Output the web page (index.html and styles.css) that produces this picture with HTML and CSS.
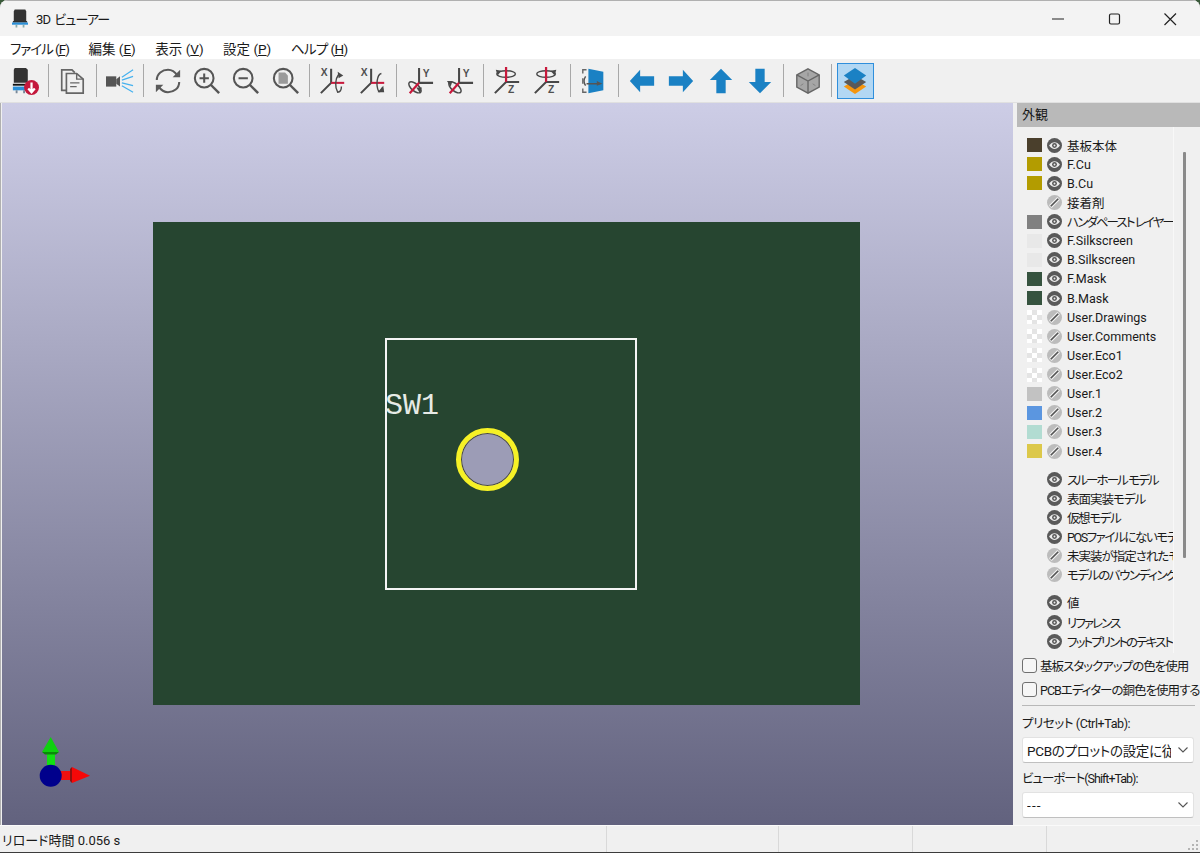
FILE: index.html
```html
<!DOCTYPE html>
<html lang="ja">
<head>
    <meta charset="UTF-8">
    <title>3D ビューアー</title>
    <link rel="stylesheet" href="styles.css">
</head>
<body>

<svg class="defs" width="0" height="0">
    <symbol id="eye" viewBox="0 0 16 16">
        <circle cx="8" cy="8" r="8" fill="#595959"/>
        <path d="M2.2 8C3.8 5.6 6 4.4 8 4.4S12.2 5.6 13.8 8C12.2 10.4 10 11.6 8 11.6S3.8 10.4 2.2 8Z" fill="#ececec"/>
        <circle cx="8" cy="8" r="2.6" fill="#595959"/>
        <circle cx="8" cy="8" r="1" fill="#ececec"/>
    </symbol>
    <symbol id="off" viewBox="0 0 16 16">
        <circle cx="8" cy="8" r="8" fill="#bcbcbc"/>
        <path d="M3.6 12.4L12.4 3.6" stroke="#f4f4f4" stroke-width="4"/>
        <path d="M4 12L12 4" stroke="#555" stroke-width="1.8"/>
    </symbol>
    <symbol id="chip" viewBox="0 0 18 20">
        <path d="M3 0H15L16 2V13H2V2Z" fill="#333"/>
        <rect x="1" y="13" width="16" height="1.5" fill="#111"/>
        <rect x="0" y="14.5" width="18" height="2.5" fill="#2a8fd8"/>
        <path d="M4 17H6V20H4ZM12 17H14V20H12Z" fill="#8aa"/>
    </symbol>
</svg>

<div class="window">

    <div class="titlebar">
        <svg class="app-icon" width="16" height="19"><use href="#chip"/></svg>
        <span class="title">3D ビューアー</span>
        <div class="winctl">
            <svg width="46" height="36" viewBox="0 0 46 36"><path d="M17 18H29" stroke="#222" stroke-width="1.2"/></svg>
            <svg width="46" height="36" viewBox="0 0 46 36"><rect x="18.5" y="13" width="10" height="10" rx="1.5" fill="none" stroke="#222" stroke-width="1.2"/></svg>
            <svg width="46" height="36" viewBox="0 0 46 36"><path d="M17.5 12.5L29 24M29 12.5L17.5 24" stroke="#222" stroke-width="1.2"/></svg>
        </div>
    </div>

    <div class="menubar">
        <span class="menu-kana">ファイル (<u>F</u>)</span>
        <span>編集 (<u>E</u>)</span>
        <span>表示 (<u>V</u>)</span>
        <span>設定 (<u>P</u>)</span>
        <span class="menu-kana2">ヘルプ (<u>H</u>)</span>
    </div>

    <div class="toolbar">
        <div class="tool">
            <svg viewBox="0 0 30 30"><path d="M4 1H16L18 3V17H3V3Z" fill="#333"/><rect x="2" y="18" width="17" height="2" fill="#111"/><rect x="2" y="21" width="15" height="4" fill="#2a8fd8"/><path d="M5 25H7V28H5ZM13 25H15V28H13Z" fill="#789"/><circle cx="22" cy="22" r="8" fill="#c4183c"/><path d="M22 16.5V26M18.5 23L22 27L25.5 23" fill="none" stroke="#fff" stroke-width="2.4"/></svg>
        </div>
        <i class="sep"></i>
        <div class="tool">
            <svg viewBox="0 0 30 30"><path d="M9 25H4V3H15L18 6" fill="none" stroke="#666" stroke-width="1.8"/><path d="M9 7H20L27 13V28H9Z" fill="#f0f0f0" stroke="#666" stroke-width="1.8"/><path d="M20 7V13H27M13 17H23M13 21H20" fill="none" stroke="#666" stroke-width="1.5"/></svg>
        </div>
        <i class="sep"></i>
        <div class="tool">
            <svg viewBox="0 0 30 30"><rect x="0" y="10" width="11" height="11" fill="#555"/><path d="M11 13L15 10V21L11 18Z" fill="#555"/><path d="M17 11L29 3M17 14L29 10M17 17L29 20M17 20L29 27" stroke="#45b1ee" stroke-width="1.3"/></svg>
        </div>
        <i class="sep"></i>
        <div class="tool">
            <svg viewBox="0 0 30 30"><path d="M3 14C3 7 9 3 15 3C20 3 23 6 25 9M27 16C27 23 21 27 15 27C10 27 7 24 5 21" fill="none" stroke="#5a5a5a" stroke-width="2.2"/><path d="M28 3V11H20ZM2 27V19H10Z" fill="#5a5a5a"/></svg>
        </div>
        <div class="tool">
            <svg viewBox="0 0 30 30"><circle cx="12" cy="12" r="10" fill="none" stroke="#555" stroke-width="2.2"/><path d="M19 19L28 28" stroke="#555" stroke-width="2.6"/><path d="M12 7V17M7 12H17" stroke="#555" stroke-width="2.2"/></svg>
        </div>
        <div class="tool">
            <svg viewBox="0 0 30 30"><circle cx="12" cy="12" r="10" fill="none" stroke="#555" stroke-width="2.2"/><path d="M19 19L28 28" stroke="#555" stroke-width="2.6"/><path d="M7 12H17" stroke="#555" stroke-width="2.2"/></svg>
        </div>
        <div class="tool">
            <svg viewBox="0 0 30 30"><circle cx="12" cy="12" r="10" fill="none" stroke="#555" stroke-width="2.2"/><path d="M19 19L28 28" stroke="#555" stroke-width="2.6"/><path d="M7 6H14L17 9V18H7Z" fill="#9a9a9a"/></svg>
        </div>
        <i class="sep"></i>
        <div class="tool">
            <svg viewBox="0 0 30 30"><text x="2" y="10" class="axis">X</text><path d="M2 28L13 17V2" fill="none" stroke="#484848" stroke-width="2.2"/><path d="M13 17H27" stroke="#c8193c" stroke-width="2.2"/><path d="M21 8C17 13 17 22 20 27C23 27 24 24 24 21" fill="none" stroke="#484848" stroke-width="1.5"/><path d="M20 5L26 9L21 12Z" fill="#484848"/></svg>
        </div>
        <div class="tool">
            <svg viewBox="0 0 30 30"><text x="2" y="10" class="axis">X</text><path d="M2 28L13 17V2" fill="none" stroke="#484848" stroke-width="2.2"/><path d="M13 17H27" stroke="#c8193c" stroke-width="2.2"/><path d="M24 7C19 8 18 20 21 26C23 27 25 25 25 22" fill="none" stroke="#484848" stroke-width="1.5"/><path d="M20 27L27 27L26 20Z" fill="#484848"/></svg>
        </div>
        <i class="sep"></i>
        <div class="tool">
            <svg viewBox="0 0 30 30"><text x="18" y="11" class="axis">Y</text><path d="M14 1V17H29" fill="none" stroke="#484848" stroke-width="2.2"/><ellipse cx="9.600" cy="21.800" rx="8" ry="3.800" transform="rotate(40 9.600 21.800)" fill="none" stroke="#484848" stroke-width="1.6"/><path d="M14 17L4 28" stroke="#c8193c" stroke-width="2.400"/><path d="M11 22L17 22L15 28Z" fill="#484848"/></svg>
        </div>
        <div class="tool">
            <svg viewBox="0 0 30 30"><text x="18" y="11" class="axis">Y</text><path d="M14 1V17H29" fill="none" stroke="#484848" stroke-width="2.2"/><ellipse cx="9.600" cy="21.800" rx="8" ry="3.800" transform="rotate(40 9.600 21.800)" fill="none" stroke="#484848" stroke-width="1.6"/><path d="M14 17L4 28" stroke="#c8193c" stroke-width="2.400"/><path d="M1 15L7 15L5 21Z" fill="#484848"/></svg>
        </div>
        <i class="sep"></i>
        <div class="tool">
            <svg viewBox="0 0 30 30"><text x="16" y="28" class="axis">Z</text><path d="M2 28L14 16H28" fill="none" stroke="#484848" stroke-width="2.2"/><ellipse cx="14" cy="7.500" rx="10" ry="3.500" fill="none" stroke="#484848" stroke-width="1.5"/><path d="M14 16V0" stroke="#c8193c" stroke-width="2.400"/><path d="M3 3L9 4L5 9Z" fill="#484848"/></svg>
        </div>
        <div class="tool">
            <svg viewBox="0 0 30 30"><text x="16" y="28" class="axis">Z</text><path d="M2 28L14 16H28" fill="none" stroke="#484848" stroke-width="2.2"/><ellipse cx="14" cy="7.500" rx="10" ry="3.500" fill="none" stroke="#484848" stroke-width="1.5"/><path d="M14 16V0" stroke="#c8193c" stroke-width="2.400"/><path d="M25 3L19 4L23 9Z" fill="#484848"/></svg>
        </div>
        <i class="sep"></i>
        <div class="tool">
            <svg viewBox="0 0 30 30"><path d="M7 3H3V7M3 12V18M3 23V27H7" fill="none" stroke="#666" stroke-width="1.5"/><path d="M9 2L25 5V25L9 28Z" fill="#1a81c4"/><path d="M6 10C4 13 4 17 6 20M7 18H21" fill="none" stroke="#555" stroke-width="1.5"/><path d="M18 15L24 18L18 20Z" fill="#555"/></svg>
        </div>
        <i class="sep"></i>
        <div class="tool">
            <svg viewBox="0 0 30 30"><path d="M2 15L13 3V10H28V20H13V27Z" fill="#1a81c4"/></svg>
        </div>
        <div class="tool">
            <svg viewBox="0 0 30 30"><path d="M28 15L17 3V10H2V20H17V27Z" fill="#1a81c4"/></svg>
        </div>
        <div class="tool">
            <svg viewBox="0 0 30 30"><path d="M15 2L27 14H20V28H10V14H3Z" fill="#1a81c4"/></svg>
        </div>
        <div class="tool">
            <svg viewBox="0 0 30 30"><path d="M15 28L27 16H20V2H10V16H3Z" fill="#1a81c4"/></svg>
        </div>
        <i class="sep"></i>
        <div class="tool">
            <svg viewBox="0 0 30 30"><path d="M15 2L27 8.5V21.500L15 28L3 21.500V8.500Z" fill="#a6a6a6" stroke="#666" stroke-width="1.5"/><path d="M3 8.500L15 15L27 8.500M15 15V28" fill="none" stroke="#666" stroke-width="1.5"/><path d="M15 6V10M7 20L10 18M23 20L20 18" stroke="#808080" stroke-width="1"/></svg>
        </div>
        <i class="sep"></i>
        <div class="tool active">
            <svg viewBox="0 0 30 30"><path d="M15 14L27 21L15 29L3 21Z" fill="#f5960f"/><path d="M15 9L27 16L15 24L3 16Z" fill="#595959"/><path d="M15 1L27 9L15 18L3 9Z" fill="#1a81c4"/></svg>
        </div>
    </div>

    <div class="main">
        <div class="canvas">
            <div class="board">
                <div class="courtyard">
                    <span class="refdes">SW1</span>
                    <div class="hole"></div>
                </div>
            </div>
            <svg class="gizmo" width="54" height="60" viewBox="0 0 54 60">
                <rect x="9" y="16" width="8" height="16" fill="#12e012"/>
                <path d="M12.700 0L21 15L4 15Z" fill="#0fd00f"/>
                <path d="M4 15L21 15L18 17.500H7Z" fill="#0a8a0a"/>
                <rect x="20" y="34" width="15" height="9" fill="#f01010"/>
                <path d="M34 30L52 38.700L34 46Z" fill="#f50808"/>
                <path d="M34 30V46L32 44V32Z" fill="#901010"/>
                <circle cx="12.700" cy="38.700" r="11" fill="#00008c"/>
            </svg>
        </div>

        <div class="panel">
            <div class="panel-head">外観</div>
            <div class="panel-body">
                <div class="layers">
                    <div class="row"><i class="swatch c-board"></i><svg class="vis"><use href="#eye"/></svg><span>基板本体</span></div>
                    <div class="row"><i class="swatch c-cu"></i><svg class="vis"><use href="#eye"/></svg><span>F.Cu</span></div>
                    <div class="row"><i class="swatch c-cu"></i><svg class="vis"><use href="#eye"/></svg><span>B.Cu</span></div>
                    <div class="row"><i class="swatch none"></i><svg class="vis"><use href="#off"/></svg><span>接着剤</span></div>
                    <div class="row"><i class="swatch c-paste"></i><svg class="vis"><use href="#eye"/></svg><span class="kana-l">ハンダペースト レイヤー</span></div>
                    <div class="row"><i class="swatch c-silk"></i><svg class="vis"><use href="#eye"/></svg><span>F.Silkscreen</span></div>
                    <div class="row"><i class="swatch c-silk"></i><svg class="vis"><use href="#eye"/></svg><span>B.Silkscreen</span></div>
                    <div class="row"><i class="swatch c-mask"></i><svg class="vis"><use href="#eye"/></svg><span>F.Mask</span></div>
                    <div class="row"><i class="swatch c-mask"></i><svg class="vis"><use href="#eye"/></svg><span>B.Mask</span></div>
                    <div class="row"><i class="swatch c-check"></i><svg class="vis"><use href="#off"/></svg><span>User.Drawings</span></div>
                    <div class="row"><i class="swatch c-check"></i><svg class="vis"><use href="#off"/></svg><span>User.Comments</span></div>
                    <div class="row"><i class="swatch c-check"></i><svg class="vis"><use href="#off"/></svg><span>User.Eco1</span></div>
                    <div class="row"><i class="swatch c-check"></i><svg class="vis"><use href="#off"/></svg><span>User.Eco2</span></div>
                    <div class="row"><i class="swatch c-u1"></i><svg class="vis"><use href="#off"/></svg><span>User.1</span></div>
                    <div class="row"><i class="swatch c-u2"></i><svg class="vis"><use href="#off"/></svg><span>User.2</span></div>
                    <div class="row"><i class="swatch c-u3"></i><svg class="vis"><use href="#off"/></svg><span>User.3</span></div>
                    <div class="row"><i class="swatch c-u4"></i><svg class="vis"><use href="#off"/></svg><span>User.4</span></div>

                    <div class="group">
                        <div class="row"><i class="swatch none"></i><svg class="vis"><use href="#eye"/></svg><span class="kana-l">スルーホール モデル</span></div>
                        <div class="row"><i class="swatch none"></i><svg class="vis"><use href="#eye"/></svg><span class="kana-s">表面実装モデル</span></div>
                        <div class="row"><i class="swatch none"></i><svg class="vis"><use href="#eye"/></svg><span class="kana-m">仮想モデル</span></div>
                        <div class="row"><i class="swatch none"></i><svg class="vis"><use href="#eye"/></svg><span class="kana-m">POSファイルにないモデル</span></div>
                        <div class="row"><i class="swatch none"></i><svg class="vis"><use href="#off"/></svg><span class="kana-s">未実装が指定されたモデル</span></div>
                        <div class="row"><i class="swatch none"></i><svg class="vis"><use href="#off"/></svg><span class="kana-m">モデルのバウンディング</span></div>
                    </div>
                    <div class="group">
                        <div class="row"><i class="swatch none"></i><svg class="vis"><use href="#eye"/></svg><span>値</span></div>
                        <div class="row"><i class="swatch none"></i><svg class="vis"><use href="#eye"/></svg><span class="kana-l">リファレンス</span></div>
                        <div class="row"><i class="swatch none"></i><svg class="vis"><use href="#eye"/></svg><span class="kana-l">フットプリントのテキスト</span></div>
                    </div>
                </div>
                <div class="scrollbar"><i></i></div>
            </div>

            <label class="check"><i></i><span class="kana-s">基板スタックアップの色を使用</span></label>
            <label class="check"><i></i><span class="kana-s">PCBエディターの銅色を使用する</span></label>
            <div class="rule"></div>

            <div class="field-label first tight">プリセット (Ctrl+Tab):</div>
            <div class="combo">
                <span>PCBのプロットの設定に従う</span>
                <svg width="12" height="8" viewBox="0 0 12 8"><path d="M1.5 1.5L6 6L10.5 1.5" fill="none" stroke="#555" stroke-width="1.1"/></svg>
            </div>
            <div class="field-label kana-s">ビューポート(Shift+Tab):</div>
            <div class="combo">
                <span class="dashes">---</span>
                <svg width="12" height="8" viewBox="0 0 12 8"><path d="M1.5 1.5L6 6L10.5 1.5" fill="none" stroke="#555" stroke-width="1.1"/></svg>
            </div>
        </div>
    </div>

    <div class="statusbar">
        <div class="pane first">リロード時間 0.056 s</div>
        <div class="pane w172"></div>
        <div class="pane w134"></div>
        <div class="pane w134"></div>
        <div class="pane last"></div>
        <svg class="grip" width="12" height="12" viewBox="0 0 12 12"><path d="M8 0h2v2H8zM4 4h2v2H4zM8 4h2v2H8zM0 8h2v2H0zM4 8h2v2H4zM8 8h2v2H8z" fill="#b4b4b4"/></svg>
    </div>
</div>

</body>
</html>
```

FILE: styles.css
```css
/* KiCad 3D viewer window */
* {
    box-sizing: border-box;
}

html, body {
    margin: 0;
    padding: 0;
    height: 100%;
    overflow: hidden;
    background: #3a5a3a;
}

body {
    font-family: Roboto, "Noto Sans CJK JP", sans-serif;
    font-size: 12.5px;
    font-feature-settings: "palt";
    color: #1a1a1a;
}

.defs {
    position: absolute;
}

.axis {
    font-family: "Liberation Sans", sans-serif;
    font-size: 11px;
    font-weight: 700;
    fill: #505050;
}

/* kana is narrower in the original UI font */
.kana-s { letter-spacing: -1px; }
.kana-m { letter-spacing: -1.4px; }
.kana-l { letter-spacing: -1.9px; }
.tight { letter-spacing: -0.4px; }

.window {
    width: 1200px;
    height: 853px;
    display: flex;
    flex-direction: column;
    background: #f0f0f0;
    border-radius: 8px 8px 0 0;
    box-shadow: inset 0 1px 0 #b0b0b0, inset 1px 0 0 #b0b0b0, inset -1px 0 0 #b0b0b0;
    overflow: hidden;
}

/* Title bar */
.titlebar {
    height: 36px;
    display: flex;
    align-items: center;
    background: #f3f3f3;
    border-top: 1px solid #b0b0b0;
    padding-left: 12px;
    flex: none;
}

.app-icon {
    margin-right: 8px;
}

.title {
    font-size: 13px;
    letter-spacing: -0.9px;
    word-spacing: 2px;
}

.winctl {
    margin-left: auto;
    display: flex;
    gap: 10px;
    padding-right: 7px;
}

.winctl svg {
    display: block;
}

/* Menu */
.menubar {
    height: 23px;
    background: #fff;
    display: flex;
    align-items: center;
    gap: 19.5px;
    padding-left: 10px;
    font-size: 13.5px;
    flex: none;
}

.menu-kana { letter-spacing: -1px; }
.menu-kana2 { letter-spacing: -0.6px; }

/* Toolbar */
.toolbar {
    height: 43px;
    display: flex;
    align-items: center;
    padding-left: 5px;
    background: #f0f0f0;
    flex: none;
}

.tool {
    width: 39.3px;
    height: 36px;
    display: flex;
    align-items: center;
    justify-content: center;
    flex: none;
}

.tool svg {
    width: 28px;
    height: 28px;
    display: block;
}

.tool.active {
    background: #b2d7f3;
    border: 1px solid #2f8fdc;
    width: 37px;
    margin-left: 1px;
}

.sep {
    width: 8.4px;
    height: 33px;
    flex: none;
    background: linear-gradient(#a8a8a8, #a8a8a8) center / 1px 100% no-repeat;
}

/* Main area */
.main {
    flex: 1;
    display: flex;
    min-height: 0;
    border-top: 1px solid #e0e0e0;
}

.canvas {
    position: relative;
    width: 1011px;
    margin-left: 2px;
    flex: none;
    background: linear-gradient(#cdcde6, #62627e);
}

.board {
    position: absolute;
    left: 151px;
    top: 119px;
    width: 707px;
    height: 483px;
    background: #264530;
}

.courtyard {
    position: absolute;
    left: 232px;
    top: 116px;
    width: 252px;
    height: 252px;
    border: 2px solid #f4f4f4;
}

.refdes {
    position: absolute;
    left: -2px;
    top: 49px;
    font-family: "Liberation Mono", monospace;
    font-size: 30px;
    line-height: 34px;
    color: #e6ebe6;
}

.hole {
    position: absolute;
    left: 69px;
    top: 88px;
    width: 63px;
    height: 63px;
    border-radius: 50%;
    border: 5px solid #f6f126;
    background: #9c9cb6;
    box-shadow: inset 0 0 0 1px #4a4a40;
}

.gizmo {
    position: absolute;
    left: 36px;
    bottom: 28px;
}

/* Appearance panel */
.panel {
    margin-left: 4px;
    flex: 1;
    display: flex;
    flex-direction: column;
    background: #f0f0f0;
    min-width: 0;
}

.panel-head {
    height: 24px;
    background: #b9b9b9;
    font-size: 13px;
    line-height: 24px;
    padding-left: 5px;
    flex: none;
}

.panel-body {
    display: flex;
    height: 526px;
    flex: none;
}

.layers {
    width: 157px;
    flex: none;
    overflow: hidden;
    padding-top: 8.5px;
    border-right: 1px solid #f8f8f8;
}

.row {
    height: 19.125px;
    display: flex;
    align-items: center;
    padding-left: 10px;
    white-space: nowrap;
}

.swatch {
    width: 15px;
    height: 14px;
    flex: none;
    margin-right: 5px;
}

.none { background: none; }
.c-board { background: #4a3f2c; }
.c-cu { background: #b39c00; }
.c-paste { background: #808080; }
.c-silk { background: #e8e8e8; }
.c-mask { background: #36533f; }
.c-u1 { background: #c2c2c2; }
.c-u2 { background: #5b96e0; }
.c-u3 { background: #b2dcd2; }
.c-u4 { background: #dcc84a; }
.c-check {
    background: repeating-conic-gradient(#e4e4e4 0 25%, #fff 0 50%) 0 0 / 10px 10px;
}

.vis {
    width: 15px;
    height: 15px;
    flex: none;
    margin-right: 5px;
}

.group {
    margin-top: 9px;
}

.scrollbar {
    flex: 1;
    position: relative;
}

.scrollbar i {
    position: absolute;
    left: 9px;
    top: 25px;
    width: 3px;
    height: 406px;
    background: #8a8a8a;
    border-radius: 1px;
}

.check {
    height: 24px;
    display: flex;
    align-items: center;
    padding-left: 5px;
    gap: 3px;
    white-space: nowrap;
}

.check i {
    width: 15px;
    height: 15px;
    border: 1px solid #707070;
    border-radius: 3px;
    background: #f6f6f6;
    flex: none;
}

.rule {
    height: 1px;
    margin: 4px 5px 0;
    background: #b8b8b8;
}

.field-label {
    height: 19px;
    line-height: 19px;
    padding-left: 5px;
    margin-top: 6.5px;
    white-space: nowrap;
}

.field-label.first {
    margin-top: 8px;
}

.combo {
    height: 26px;
    margin: 3.5px 6px 0 5px;
    background: #fff;
    border: 1px solid #e2e2e2;
    border-bottom-color: #c0c0c0;
    border-radius: 3px;
    display: flex;
    align-items: center;
    padding: 0 4px;
    font-size: 13.5px;
    letter-spacing: -0.3px;
}

.combo span {
    flex: 1;
    overflow: hidden;
    white-space: nowrap;
}

.combo .dashes {
    letter-spacing: 1.2px;
}

.combo svg {
    margin-left: 6px;
    flex: none;
}

/* Status bar */
.statusbar {
    position: relative;
    height: 28px;
    display: flex;
    flex: none;
    background: #f0f0f0;
    border-top: 1px solid #fafafa;
    border-bottom: 1px solid #3c3c3c;
}

.pane {
    border-right: 1px solid #d9d9d9;
    height: 100%;
    line-height: 30px;
    padding-left: 2px;
    font-size: 13px;
}

.pane.first { width: 607px; }
.pane.w172 { width: 172px; }
.pane.w134 { width: 134px; }
.pane.last { flex: 1; border-right: 0; }

.grip {
    position: absolute;
    right: 0;
    bottom: 0;
}
```
